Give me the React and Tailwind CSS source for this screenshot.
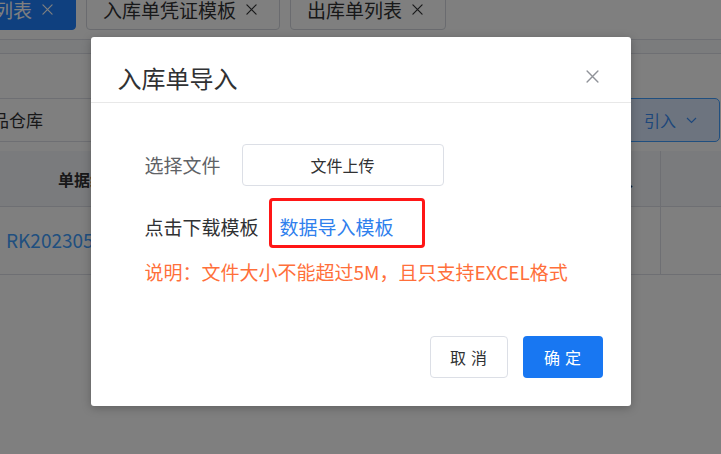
import React from "react";

function CloseIcon({ size = 11, className = "" }) {
  return (
    <svg
      width={size}
      height={size}
      viewBox="0 0 12 12"
      className={className}
      fill="none"
      stroke="currentColor"
      strokeWidth="1.3"
      strokeLinecap="round"
    >
      <path d="M1 1L11 11M11 1L1 11" />
    </svg>
  );
}

function Tab({ label, active }) {
  return (
    <div
      className={`h-[42px] -mt-[12px] flex items-center gap-[10px] pl-[16px] pr-[22px] border rounded-b-[4px] shrink-0 text-[19px] leading-none ${
        active
          ? "bg-[#1e80ff] border-[#1e80ff] text-white"
          : "bg-white border-[#d4d7de] text-[#303133]"
      }`}
    >
      <span>{label}</span>
      <CloseIcon size={11} />
    </div>
  );
}

function BackgroundPage() {
  return (
    <div className="w-full h-full bg-white">
      {/* tabs */}
      <div className="h-[40px] border-b border-[#dcdfe6] flex gap-[10px] -ml-[80px]">
        <Tab label="入库单列表" active />
        <Tab label="入库单凭证模板" />
        <Tab label="出库单列表" />
      </div>
      <div className="h-[14px] bg-[#f7f8fa] border-b border-[#dcdfe6]" />

      {/* toolbar */}
      <div className="mt-[44px] flex h-[44px]">
        <div className="flex-1 border-y border-[#dcdfe6] flex items-center -ml-[25px] text-[17px] text-[#303133]">
          成品仓库
        </div>
        <div className="w-[100px] mr-[1px] border border-[#409eff] rounded-[5px] bg-[#dbe9ff] text-[#3a8ef6] flex items-center justify-end gap-[10px] pr-[22px]">
          <span className="text-[16px]">引入</span>
          <svg width="11" height="7" viewBox="0 0 11 7" fill="none" stroke="currentColor" strokeWidth="1.2">
            <path d="M1 1L5.5 5.5L10 1" />
          </svg>
        </div>
      </div>

      {/* table */}
      <div className="mt-[9px]">
        <div className="h-[56px] bg-[#f5f7fa] border-b border-[#dcdfe6] flex text-[16px] font-bold text-[#303133]">
          <div className="w-[180px] flex items-center justify-center">单据编号</div>
          <div className="flex-1" />
          <div className="w-[160px] flex items-center justify-end pr-[27px] border-r border-[#dcdfe6]">制单人</div>
          <div className="w-[60px]" />
        </div>
        <div className="h-[68px] border-b border-[#dcdfe6] flex text-[19px]">
          <div className="w-[300px] flex items-center pl-[6px] text-[#409eff]">RK20230512001</div>
          <div className="flex-1" />
          <div className="w-[160px] border-r border-[#dcdfe6]" />
          <div className="w-[60px]" />
        </div>
      </div>
    </div>
  );
}

export default function App() {
  return (
    <div
      className="relative w-[721px] h-[454px] overflow-hidden"
      style={{ fontFamily: '"Noto Sans CJK SC", "Noto Sans", sans-serif' }}
    >
      <BackgroundPage />

      {/* modal overlay */}
      <div className="absolute inset-0 bg-black/50 flex justify-center items-start">
        <div className="mt-[37px] w-[540px] bg-white rounded-[3px] shadow-[0_2px_10px_rgba(0,0,0,0.25)] relative">
          <div className="pt-[29px] pb-[12px] pl-[27px] border-b border-[#e8e8e8]">
            <div className="text-[24px] leading-[24px] text-[#303133]">入库单导入</div>
          </div>
          <button className="absolute top-[33px] right-[32px] text-[#909399]">
            <CloseIcon size={13} />
          </button>

          <div className="pt-[41px] px-[54px]">
            <div className="flex items-center h-[42px]">
              <span className="text-[19px] text-[#606266] mr-[21px]">选择文件</span>
              <button className="w-[202px] h-[42px] border border-[#dcdfe6] rounded-[4px] text-[16px] text-[#303133]">
                文件上传
              </button>
            </div>
            <div className="mt-[28px] flex items-center h-[26px] text-[19px] leading-[26px]">
              <span className="text-[#303133] mr-[21px]">点击下载模板</span>
              <span className="relative text-[#2f80ed]">
                数据导入模板
                <span className="absolute -left-[11px] -right-[31px] -top-[16px] -bottom-[8px] border-[3px] border-[#ff1616] rounded-[4px]" />
              </span>
            </div>
            <div className="mt-[19px] h-[26px] text-[19px] leading-[26px] text-[#ff6f3a]">
              说明：文件大小不能超过5M，且只支持EXCEL格式
            </div>
          </div>

          <div className="mt-[51px] pb-[28px] pr-[28px] flex justify-end gap-[15px]">
            <button className="w-[78px] h-[42px] pl-[5px] border border-[#dcdfe6] rounded-[4px] text-[16px] tracking-[5px] text-[#303133]">
              取消
            </button>
            <button className="w-[80px] h-[42px] pl-[5px] bg-[#1877f2] rounded-[4px] text-[16px] tracking-[5px] text-white">
              确定
            </button>
          </div>
        </div>
      </div>
    </div>
  );
}
